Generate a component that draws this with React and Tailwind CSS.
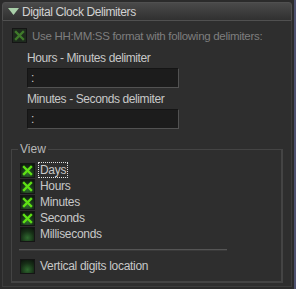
import React from 'react'

const font = { fontFamily: '"Liberation Sans", Arial, sans-serif' }

const Check = ({ checked, disabled }) => (
    <div className={`w-[15px] h-[15px] shrink-0 flex items-center justify-center border border-[#151515] ${disabled ? 'bg-[#1e2a1e]' : 'bg-[radial-gradient(circle_at_50%_75%,#2f6a2f_0%,#173017_55%,#0c120c_100%)]'}`}>
        {checked && (
            <svg width="11" height="11" viewBox="0 0 11 11">
                <path d="M2 2 L9 9 M9 2 L2 9" stroke={disabled ? '#3f7a2a' : '#5ee014'} strokeWidth="2.4" strokeLinecap="square" />
            </svg>
        )}
    </div>
)

const Row = ({ label, checked, focus }) => (
    <div className="flex items-center gap-[4px] h-[16px]">
        <Check checked={checked} />
        <span className={`text-[12px] tracking-[-0.3px] leading-[14px] whitespace-nowrap text-[#c8c8c8] px-[1px] ${focus ? 'outline outline-1 outline-dotted outline-[#e0e0e0]' : ''}`}>{label}</span>
    </div>
)

const Field = () => (
    <div className="w-[152px] h-[20px] bg-[#1c1c1c] border-t border-l border-[#151515] border-b border-r border-b-[#525252] border-r-[#525252] text-[12px] text-[#c8c8c8] px-[3px] leading-[18px]">:</div>
)

const App = () => {
    return (
        <div className="w-[296px] h-[289px] overflow-hidden bg-[#2b2b2b] pt-[2px] pl-[2px] pr-[2px] border-r-[2px] border-[#4d5170]" style={font}>
            <div className="h-[19px] flex items-center gap-[3px] pl-[5px] rounded-t-[3px] border border-[#505050] bg-gradient-to-b from-[#4a4a4a] to-[#303030]">
                <svg width="11" height="7" viewBox="0 0 11 7">
                    <path d="M0 0 H11 L5.5 7 Z" fill="#a9cfa9" />
                </svg>
                <span className="text-[12px] tracking-[-0.4px] leading-[14px] text-[#d2d2d2] whitespace-nowrap">Digital Clock Delimiters</span>
            </div>
            <div className="h-[266px] bg-[#2e2e2e] border-x border-b border-[#3c3c3c] pl-[8px] pr-[8px] pt-[7px] flex flex-col">
                <div className="flex items-center gap-[5px] pl-[1px] h-[15px]">
                    <Check checked disabled />
                    <span className="text-[11.5px] tracking-[-0.3px] leading-[14px] text-[#7e7e7e] whitespace-nowrap">Use HH:MM:SS format with following delimiters:</span>
                </div>
                <div className="pl-[16px] mt-[8px] flex flex-col">
                    <span className="text-[12px] tracking-[-0.4px] leading-[14px] text-[#c8c8c8] whitespace-nowrap">Hours - Minutes delimiter</span>
                    <div className="mt-[3px]"><Field /></div>
                    <span className="mt-[4px] text-[12px] tracking-[-0.4px] leading-[14px] text-[#c8c8c8] whitespace-nowrap">Minutes - Seconds delimiter</span>
                    <div className="mt-[3px]"><Field /></div>
                </div>
                <div className="relative mt-[20px] h-[134px] border-t border-l border-[#444] border-b-2 border-r-2 border-b-[#444] border-r-[#444] pl-[8px] pt-[12px]">
                    <span className="absolute -top-[8px] left-[6px] bg-[#2e2e2e] px-[2px] text-[12px] leading-[14px] text-[#b8b8b8]">View</span>
                    <Row label="Days" checked focus />
                    <Row label="Hours" checked />
                    <Row label="Minutes" checked />
                    <Row label="Seconds" checked />
                    <Row label="Milliseconds" />
                    <div className="mt-[7px] mb-[7px] w-[208px] h-[2px] border-t border-[#555] border-b border-b-[#3a3a3a] -ml-[1px]" />
                    <Row label="Vertical digits location" />
                </div>
            </div>
        </div>
    )
}

export default App
